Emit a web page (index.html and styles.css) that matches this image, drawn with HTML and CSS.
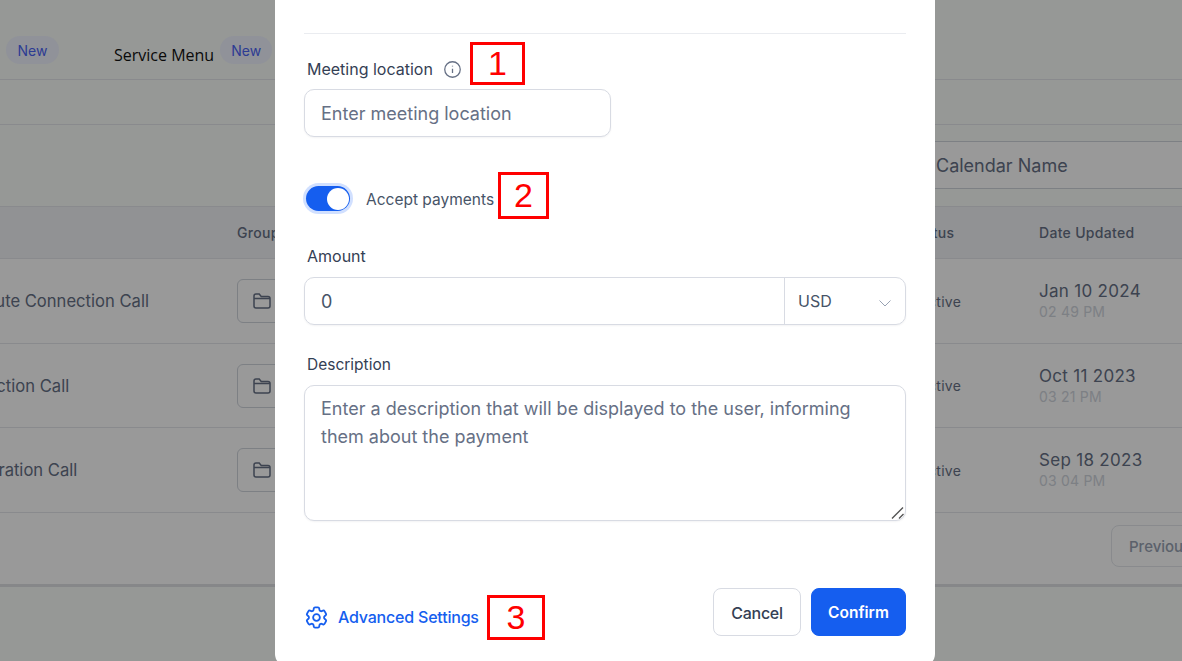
FILE: index.html
```html
<!DOCTYPE html>
<html lang="en">

<head>
    <meta charset="UTF-8">
    <meta name="viewport" content="width=device-width, initial-scale=1.0">
    <title>Calendars</title>
    <link rel="stylesheet" href="styles.css">
</head>

<body>
    <!-- Page behind the modal, scrolled sideways like the original -->
    <div class="page">
        <div class="top-nav">
            <span class="pill pill-first">New</span>
            <span class="nav-link">Service Menu</span>
            <span class="pill">New</span>
        </div>
        <div class="sub-nav"></div>
        <div class="toolbar">
            <div class="search-box">Calendar Name</div>
        </div>

        <div class="table">
            <div class="row head">
                <div></div>
                <div>Group</div>
                <div class="head-status">Status</div>
                <div>Date Updated</div>
            </div>
            <div class="row">
                <div class="name">15 Minute Connection Call</div>
                <div><span class="group-btn"><svg class="folder" viewBox="0 0 18 16"><path d="M1 13V3a2 2 0 0 1 2-2h3.2l2 2.4H15a2 2 0 0 1 2 2V13a2 2 0 0 1-2 2H3a2 2 0 0 1-2-2zM1 5.500h16"/></svg></span></div>
                <div class="status">Active</div>
                <div>
                    <div class="date">Jan 10 2024</div>
                    <div class="time">02 49 PM</div>
                </div>
            </div>
            <div class="row row-short">
                <div class="name">Connection Call</div>
                <div><span class="group-btn"><svg class="folder" viewBox="0 0 18 16"><path d="M1 13V3a2 2 0 0 1 2-2h3.2l2 2.4H15a2 2 0 0 1 2 2V13a2 2 0 0 1-2 2H3a2 2 0 0 1-2-2zM1 5.500h16"/></svg></span></div>
                <div class="status">Active</div>
                <div>
                    <div class="date">Oct 11 2023</div>
                    <div class="time">03 21 PM</div>
                </div>
            </div>
            <div class="row">
                <div class="name">Inauguration Call</div>
                <div><span class="group-btn"><svg class="folder" viewBox="0 0 18 16"><path d="M1 13V3a2 2 0 0 1 2-2h3.2l2 2.4H15a2 2 0 0 1 2 2V13a2 2 0 0 1-2 2H3a2 2 0 0 1-2-2zM1 5.500h16"/></svg></span></div>
                <div class="status">Active</div>
                <div>
                    <div class="date">Sep 18 2023</div>
                    <div class="time">03 04 PM</div>
                </div>
            </div>
            <div class="pagination">
                <span class="page-btn">Previous</span>
            </div>
        </div>
    </div>

    <div class="overlay"></div>

    <!-- Modal -->
    <div class="modal">
        <div class="divider"></div>

        <div class="label label-first">
            Meeting location
            <svg class="info" viewBox="0 0 16 16"><circle cx="8" cy="8" r="7.300"/><path d="M8 7.400v4M8 4.400v.8"/></svg>
        </div>
        <input class="input input-short" type="text" placeholder="Enter meeting location">

        <div class="toggle-row">
            <span class="toggle"><span class="knob"></span></span>
            <span class="toggle-label">Accept payments</span>
        </div>

        <div class="label label-amount">Amount</div>
        <div class="amount-box">
            <input class="amount-input" type="text" value="0">
            <div class="currency">
                USD
                <svg class="chevron" viewBox="0 0 12 7"><path d="M.5.500 6 6l5.500-5.500"/></svg>
            </div>
        </div>

        <div class="label label-desc">Description</div>
        <div class="textarea-wrap">
            <textarea class="textarea" placeholder="Enter a description that will be displayed to the user, informing them about the payment"></textarea>
            <svg class="grip" viewBox="0 0 13 12"><path d="M1 11.500 12 .5M8 11.500l4.500-4.500"/></svg>
        </div>

        <div class="modal-footer">
            <a class="advanced" href="#">
                <svg class="gear" viewBox="0 0 24 24"><path d="M9.594 3.940c.09-.542.560-.940 1.110-.940h2.593c.550 0 1.020.398 1.110.940l.213 1.281c.063.374.313.686.645.870.074.040.147.083.220.127.324.196.720.257 1.075.124l1.217-.456a1.125 1.125 0 0 1 1.370.490l1.296 2.247a1.125 1.125 0 0 1-.260 1.431l-1.003.827c-.293.240-.438.613-.431.992a6.759 6.759 0 0 1 0 .255c-.007.378.138.750.430.990l1.005.828c.424.350.534.954.260 1.430l-1.298 2.247a1.125 1.125 0 0 1-1.369.491l-1.217-.456c-.355-.133-.750-.072-1.076.124a6.570 6.570 0 0 1-.220.128c-.331.183-.581.495-.644.869l-.213 1.280c-.090.543-.560.941-1.110.941h-2.594c-.550 0-1.020-.398-1.110-.940l-.213-1.281c-.062-.374-.312-.686-.644-.870a6.520 6.520 0 0 1-.220-.127c-.325-.196-.720-.257-1.076-.124l-1.217.456a1.125 1.125 0 0 1-1.369-.490l-1.297-2.247a1.125 1.125 0 0 1 .260-1.431l1.004-.827c.292-.240.437-.613.430-.992a6.932 6.932 0 0 1 0-.255c.007-.378-.138-.750-.430-.990l-1.004-.828a1.125 1.125 0 0 1-.260-1.430l1.297-2.247a1.125 1.125 0 0 1 1.370-.491l1.216.456c.356.133.751.072 1.076-.124.072-.044.146-.087.220-.128.332-.183.582-.495.644-.869l.214-1.281z"/><circle cx="12" cy="12" r="3"/></svg>
                Advanced Settings
            </a>
            <div class="actions">
                <button class="btn btn-cancel">Cancel</button>
                <button class="btn btn-confirm">Confirm</button>
            </div>
        </div>

        <!-- Red numbered callouts drawn over the screenshot -->
        <div class="callout callout-1">1</div>
        <div class="callout callout-2">2</div>
        <div class="callout callout-3">3</div>
    </div>
</body>

</html>
```

FILE: styles.css
```css
body {
    margin: 0;
    height: 661px;
    overflow: hidden;
    font-family: 'Inter', sans-serif;
    background-color: #fafdfa;
}

/* Page behind the modal */
.page {
    width: 1400px;
    margin-left: -56px;
}

.top-nav {
    display: flex;
    align-items: flex-start;
    height: 79px;
    border-bottom: 1px solid #e4e7ec;
}

.pill {
    display: block;
    width: 52px;
    height: 27px;
    margin-top: 36px;
    padding-top: 1px;
    line-height: 28px;
    text-align: center;
    font-size: 14px;
    color: #4b64f5;
    background-color: #f0f4ff;
    border-radius: 14px;
}

.pill-first {
    width: 53px;
    margin-left: 62px;
}

.nav-link {
    margin-left: 55px;
    margin-right: 6px;
    margin-top: 44px;
    font-family: 'Open Sans', sans-serif;
    font-size: 16px;
    line-height: 22px;
    color: #111;
}

.sub-nav {
    height: 44px;
    border-bottom: 1px solid #e4e7ec;
}

.toolbar {
    height: 65px;
    padding-top: 16px;
    padding-left: 900px;
    border-bottom: 1px solid #e4e7ec;
}

.search-box {
    height: 46px;
    line-height: 48px;
    padding-left: 92px;
    font-size: 18px;
    color: #667085;
    border-top: 1px solid #d0d5dd;
    border-bottom: 1px solid #d0d5dd;
    background-color: #fff;
}

.table {
    background-color: #fff;
    border-bottom: 3px solid #dfe1e4;
}

.row {
    display: grid;
    grid-template-columns: 293px 678px 124px 1fr;
    align-items: center;
    height: 84px;
    border-bottom: 1px solid #e4e7ec;
}

.row-short {
    height: 83px;
}

.row.head {
    height: 51px;
    background-color: #f2f4f7;
    font-size: 14px;
    font-weight: 500;
    letter-spacing: 0.3px;
    color: #667085;
}

.head-status {
    margin-left: -5px;
}

.name {
    padding-left: 1px;
    font-size: 16.6px;
    white-space: nowrap;
    color: #667085;
}

.group-btn {
    display: flex;
    align-items: center;
    width: 120px;
    height: 44px;
    padding-left: 15px;
    box-sizing: border-box;
    border: 1px solid #d0d5dd;
    border-radius: 6px;
}

.folder {
    width: 18px;
    height: 16px;
    fill: none;
    stroke: #667085;
    stroke-width: 1.500;
}

.status {
    margin-left: 3px;
    font-size: 14px;
    letter-spacing: 0.3px;
    color: #667085;
}

.date {
    font-size: 17px;
    line-height: 22px;
    letter-spacing: 0.3px;
    color: #667085;
}

.time {
    font-size: 14px;
    line-height: 20px;
    letter-spacing: 0.2px;
    color: #d0d5dd;
}

.pagination {
    display: flex;
    align-items: flex-start;
    height: 59px;
    padding-top: 12px;
    padding-left: 1167px;
}

.page-btn {
    width: 120px;
    height: 42px;
    line-height: 42px;
    padding-left: 17px;
    box-sizing: border-box;
    font-size: 15px;
    font-weight: 500;
    color: #98a2b3;
    border: 1px solid #e4e7ec;
    border-radius: 8px;
}

.overlay {
    position: fixed;
    top: 0;
    left: 0;
    width: 100%;
    height: 100%;
    background-color: rgba(0, 0, 0, 0.4);
}

/* Modal */
.modal {
    position: absolute;
    left: 275px;
    top: -40px;
    width: 660px;
    box-sizing: border-box;
    padding: 73px 29px 30px;
    background-color: white;
    border-radius: 12px;
}

.divider {
    height: 1px;
    background-color: #eaecf0;
}

.label {
    display: flex;
    align-items: center;
    height: 20px;
    padding-left: 3px;
    font-size: 16px;
    color: #344054;
}

.label-first {
    margin-top: 25px;
    margin-bottom: 10px;
}

.label-amount {
    margin-top: 33px;
    margin-bottom: 11px;
}

.label-desc {
    margin-top: 29px;
    margin-bottom: 11px;
    font-size: 15.5px;
}

.info {
    width: 17px;
    height: 17px;
    margin-left: 11px;
    fill: none;
    stroke: #667085;
    stroke-width: 1.200;
}

.input,
.textarea,
.amount-box {
    display: block;
    box-sizing: border-box;
    font-family: 'Inter', sans-serif;
    font-size: 18px;
    color: #475467;
    border: 1px solid #d8dbe3;
    border-radius: 10px;
    outline: none;
    box-shadow: 0 1px 2px rgba(16, 24, 40, 0.05);
}

.input {
    height: 48px;
    padding: 1px 16px 0;
}

.input-short {
    width: 307px;
}

input::placeholder,
textarea::placeholder {
    color: #667085;
    opacity: 1;
}

.toggle-row {
    display: flex;
    align-items: center;
    height: 29px;
    margin-top: 47px;
}

.toggle {
    display: flex;
    justify-content: flex-end;
    align-items: center;
    width: 44px;
    height: 25px;
    margin-left: 2px;
    padding-right: 1.500px;
    box-sizing: border-box;
    background-color: #155eef;
    border-radius: 13px;
    box-shadow: 0 0 0 3px #d1e0ff;
}

.knob {
    width: 22px;
    height: 22px;
    background-color: white;
    border-radius: 50%;
}

.toggle-label {
    margin-left: 16px;
    margin-top: 2px;
    font-size: 15.5px;
    color: #475467;
}

.amount-box {
    display: flex;
    height: 48px;
}

.amount-input {
    flex: 1;
    min-width: 0;
    padding: 0 16px;
    border: none;
    outline: none;
    background: none;
    font-family: 'Inter', sans-serif;
    font-size: 18px;
    color: #475467;
}

.currency {
    display: flex;
    align-items: center;
    justify-content: space-between;
    width: 121px;
    padding: 0 14px 0 13px;
    box-sizing: border-box;
    font-size: 16px;
    color: #475467;
    border-left: 1px solid #d8dbe3;
}

.chevron {
    width: 12px;
    height: 7px;
    margin-top: 5px;
    fill: none;
    stroke: #98a2b3;
    stroke-width: 1;
}

.textarea-wrap {
    position: relative;
    height: 136px;
}

.textarea {
    width: 602px;
    height: 136px;
    padding: 9px 16px;
    line-height: 28px;
    resize: none;
}

.grip {
    position: absolute;
    right: 2px;
    bottom: 2px;
    width: 13px;
    height: 12px;
    fill: none;
    stroke: #555;
    stroke-width: 1.400;
}

.modal-footer {
    display: flex;
    justify-content: space-between;
    align-items: center;
    margin-top: 67px;
}

.advanced {
    display: flex;
    align-items: center;
    gap: 8.5px;
    margin-top: 10px;
    margin-left: -1.500px;
    font-size: 16px;
    font-weight: 500;
    letter-spacing: -0.2px;
    color: #155eef;
    text-decoration: none;
}

.gear {
    width: 27px;
    height: 27px;
    fill: none;
    stroke: #155eef;
    stroke-width: 1.600;
}

.actions {
    display: flex;
    gap: 10px;
}

.btn {
    height: 48px;
    padding-top: 2px;
    font-family: 'Inter', sans-serif;
    font-size: 16px;
    border-radius: 8px;
    cursor: pointer;
}

.btn-cancel {
    width: 88px;
    font-weight: 500;
    letter-spacing: -0.3px;
    color: #344054;
    background-color: white;
    border: 1px solid #d8dbe3;
}

.btn-confirm {
    width: 95px;
    font-size: 15.5px;
    font-weight: 600;
    color: white;
    background-color: #155eef;
    border: 1px solid #155eef;
}

/* Callouts */
.callout {
    position: absolute;
    box-sizing: border-box;
    display: flex;
    justify-content: center;
    align-items: center;
    font-family: 'Liberation Sans', sans-serif;
    font-size: 34px;
    color: #f00;
    border: 3px solid #f00;
}

.callout-1 {
    left: 195px;
    top: 82px;
    width: 55px;
    height: 43px;
}

.callout-2 {
    left: 223px;
    top: 212px;
    width: 51px;
    height: 47px;
}

.callout-3 {
    left: 212px;
    top: 635px;
    width: 58px;
    height: 45px;
}
```
